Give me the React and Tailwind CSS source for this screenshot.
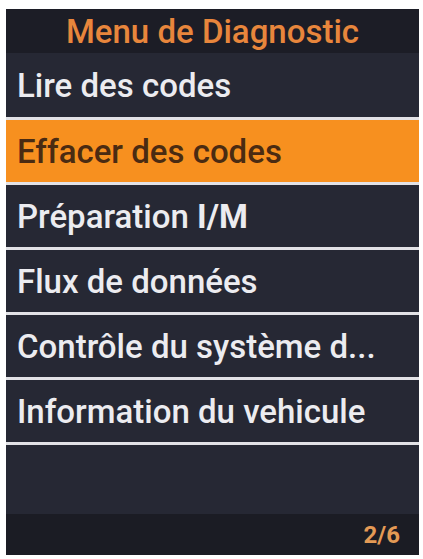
export default function App() {
  const items = [
    { label: "Lire des codes", first: true },
    { label: "Effacer des codes", active: true },
    { label: <>Préparation <span className="font-bold">I/M</span></> },
    { label: "Flux de données" },
    { label: "Contrôle du système d..." },
    { label: "Information du vehicule" },
  ];

  return (
    <div className="w-[423px] h-[559px] bg-white pt-[9px] pl-[6px] pr-[4px] font-['Roboto',sans-serif]">
      <div className="flex flex-col h-[546px] bg-[#262834]">
        {/* header */}
        <div className="h-[44px] shrink-0 bg-[#1c1d26] flex items-center justify-center">
          <span className="text-[33px] leading-none font-medium text-[#e8863c]">Menu de Diagnostic</span>
        </div>

        {/* menu rows */}
        <div className="flex flex-col gap-[3px] bg-[#e2e2e6]">
          {items.map((item, i) => (
            <div
              key={i}
              className={`flex items-center pl-[11px] ${item.first ? "h-[64px]" : "h-[62px]"} ${
                item.active ? "bg-[#f7901f] text-[#4a2b12]" : "bg-[#262834] text-[#ececf0]"
              }`}
            >
              <span className="text-[33px] leading-none font-medium whitespace-nowrap">{item.label}</span>
            </div>
          ))}
          <div className="h-0" />
        </div>

        {/* empty area */}
        <div className="flex-1 bg-[#262834]" />

        {/* footer */}
        <div className="h-[41px] shrink-0 bg-[#1b1c24] flex items-center justify-end pr-[19px]">
          <span className="text-[24px] leading-none font-bold text-[#e49a55]">2/6</span>
        </div>
      </div>
    </div>
  );
}
